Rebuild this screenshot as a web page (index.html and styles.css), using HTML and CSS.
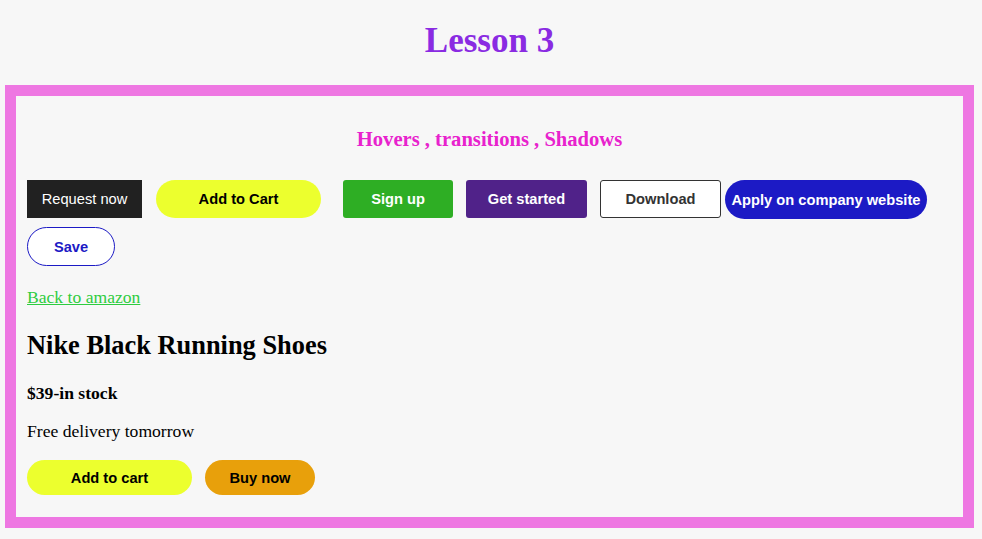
FILE: index.html
```html
<!DOCTYPE html>
<html>
<head>
<meta charset="utf-8">
<title>Lesson 3</title>
<link rel="stylesheet" href="styles.css">
</head>
<body>
<h1 class="title">Lesson 3</h1>
<div class="box">
  <h3 class="subtitle">Hovers , transitions , Shadows</h3>
  <div class="btn-row">
    <button class="btn btn-request">Request now</button>
    <button class="btn btn-cart">Add to Cart</button>
    <button class="btn btn-signup">Sign up</button>
    <button class="btn btn-started">Get started</button>
    <button class="btn btn-download">Download</button>
    <button class="btn btn-apply">Apply on company website</button>
    <button class="btn btn-save">Save</button>
  </div>
  <a class="back-link" href="#">Back to amazon</a>
  <h2 class="product-name">Nike Black Running Shoes</h2>
  <p class="price">$39-in stock</p>
  <p class="delivery">Free delivery tomorrow</p>
  <div class="buy-row">
    <button class="btn btn-add">Add to cart</button>
    <button class="btn btn-buy">Buy now</button>
  </div>
</div>
</body>
</html>
```
FILE: styles.css
```css
html, body {
  margin: 0;
  padding: 0;
  background: #f7f7f7;
}
body {
  font-family: "Liberation Serif", "Times New Roman", serif;
  font-size: 17.6px;
  color: #000;
}
.title {
  margin: 21px 0 24px;
  font-size: 35px;
  line-height: 40px;
  text-align: center;
  color: #8a2be2;
  font-weight: bold;
  padding-right: 3px;
}
.box {
  margin: 0 8px 12px 5px;
  border: 11px solid #ee77e2;
  padding: 11px 11px 22px;
}
.subtitle {
  margin: 20px 0 0;
  font-size: 20.6px;
  line-height: 24px;
  text-align: center;
  color: #e822cd;
}
.btn-row {
  display: flex;
  flex-wrap: wrap;
  row-gap: 8px;
  margin-top: 29px;
}
.btn {
  font-family: "Liberation Sans", Arial, sans-serif;
  font-size: 14.67px;
  font-weight: bold;
  border: none;
  padding: 0;
  height: 38px;
  display: flex;
  align-items: center;
  justify-content: center;
  cursor: pointer;
}
.btn-request {
  width: 115px;
  background: #212121;
  color: #fff;
  font-weight: normal;
  margin-right: 14px;
}
.btn-cart {
  width: 165px;
  background: #ecff2e;
  color: #000;
  border-radius: 19px;
  margin-right: 22px;
}
.btn-signup {
  width: 110px;
  background: #2eae24;
  color: #fff;
  border-radius: 3px;
  margin-right: 13px;
}
.btn-started {
  width: 121px;
  background: #502289;
  color: #fff;
  border-radius: 3px;
  margin-right: 13px;
}
.btn-download {
  width: 121px;
  background: #fff;
  color: #333;
  border: 1px solid #333;
  border-radius: 3px;
  margin-right: 4px;
}
.btn-apply {
  width: 202px;
  height: 39px;
  background: #1c1ac5;
  color: #fff;
  border-radius: 20px;
}
.btn-save {
  width: 88px;
  height: 39px;
  background: #fff;
  color: #1c1ac5;
  border: 1px solid #1c1ac5;
  border-radius: 20px;
}
.back-link {
  display: block;
  width: max-content;
  margin-top: 21px;
  line-height: 20px;
  color: #2ecc40;
  text-decoration: underline;
}
.product-name {
  margin: 23px 0 0;
  font-size: 26.4px;
  line-height: 30px;
  font-weight: bold;
}
.price {
  margin: 23px 0 0;
  font-weight: bold;
  line-height: 20px;
}
.delivery {
  margin: 18px 0 0;
  line-height: 20px;
}
.buy-row {
  display: flex;
  gap: 13px;
  margin-top: 19px;
}
.btn-add {
  width: 165px;
  height: 35px;
  background: #ecff2e;
  color: #000;
  border-radius: 18px;
}
.btn-buy {
  width: 110px;
  height: 35px;
  background: #e8a00b;
  color: #000;
  border-radius: 18px;
}
```
